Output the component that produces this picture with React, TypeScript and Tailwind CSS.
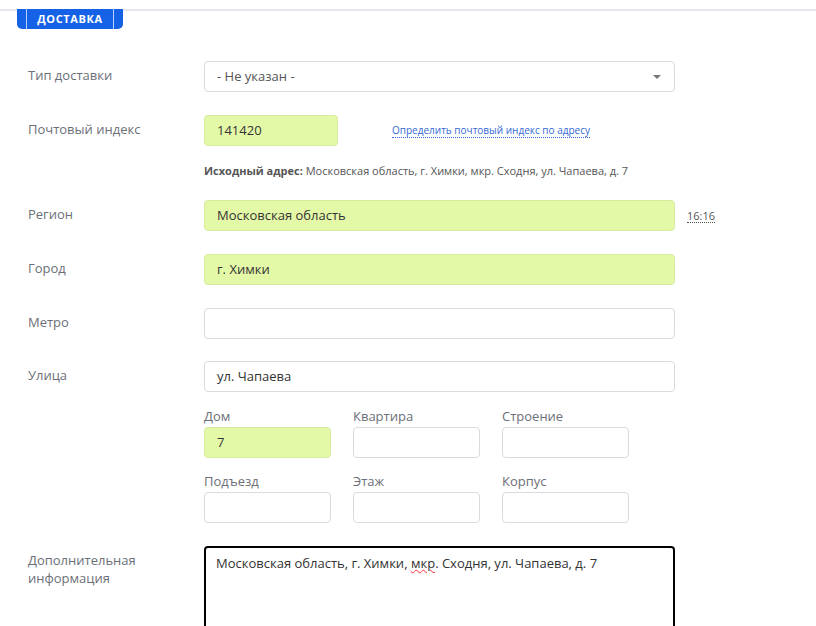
import React from 'react';

const font = { fontFamily: '"Open Sans", "Noto Sans", sans-serif' };

function Field({ value, lime, className = '' }: { value?: string; lime?: boolean; className?: string }) {
  return (
    <div
      className={`h-[31px] rounded-[4px] border px-3 flex items-center text-[13px] text-[#333] ${
        lime ? 'bg-[#e4f9a8] border-[#d6ec9c]' : 'bg-white border-[#d9dbe0]'
      } ${className}`}
    >
      {value}
    </div>
  );
}

function Row({ label, children, className = '' }: { label: React.ReactNode; children: React.ReactNode; className?: string }) {
  return (
    <div className={`flex items-start ${className}`}>
      <div className="w-[176px] shrink-0 pt-[5px] text-[13px] leading-[18px] text-[#6b6f78]">{label}</div>
      <div className="flex-1 min-w-0">{children}</div>
    </div>
  );
}

function Small({ label, value, lime }: { label: string; value?: string; lime?: boolean }) {
  return (
    <div className="w-[127px]">
      <div className="text-[13px] leading-[17px] text-[#6b6f78] mb-[2px]">{label}</div>
      <Field value={value} lime={lime} />
    </div>
  );
}

export default function App() {
  return (
    <div className="w-[816px] h-[626px] overflow-hidden bg-white relative" style={font}>
      <div className="h-[9px]" />
      <div className="border-t-2 border-[#e6e7ec]" />
      <div className="pl-[17px] -mt-[2px]">
        <div className="w-[106px] h-[20px] bg-[#1662e6] rounded-b-[5px] flex px-[9px]">
          <div className="flex-1 border-x border-white/70 flex items-center justify-center text-white text-[11px] font-bold tracking-[0.6px]">
            ДОСТАВКА
          </div>
        </div>
      </div>

      <div className="pl-[28px] pt-[32px]">
        <Row label="Тип доставки">
          <div className="w-[471px] h-[31px] rounded-[4px] border border-[#d9dbe0] px-3 flex items-center justify-between text-[13px] text-[#555]">
            <span>- Не указан -</span>
            <span className="w-0 h-0 border-x-[4px] border-x-transparent border-t-[4px] border-t-[#777] mr-[1px]" />
          </div>
        </Row>

        <Row label="Почтовый индекс" className="mt-[23px]">
          <div className="flex items-center">
            <Field value="141420" lime className="w-[134px]" />
            <a className="ml-[54px] text-[10px] text-[#3569d4] border-b border-dotted border-[#3569d4] leading-[13px]">
              Определить почтовый индекс по адресу
            </a>
          </div>
          <div className="mt-[18px] text-[11px] leading-[13px] text-[#555]">
            <span className="font-bold">Исходный адрес:</span> Московская область, г. Химки, мкр. Сходня, ул. Чапаева, д. 7
          </div>
        </Row>

        <Row label="Регион" className="mt-[23px]">
          <div className="flex items-center">
            <Field value="Московская область" lime className="w-[471px]" />
            <span className="ml-[12px] text-[11px] leading-[13px] text-[#555] border-b border-dotted border-[#555]">16:16</span>
          </div>
        </Row>

        <Row label="Город" className="mt-[23px]">
          <Field value="г. Химки" lime className="w-[471px]" />
        </Row>

        <Row label="Метро" className="mt-[23px]">
          <Field className="w-[471px]" />
        </Row>

        <Row label="Улица" className="mt-[22px]">
          <Field value="ул. Чапаева" className="w-[471px]" />
          <div className="mt-[16px] flex gap-[22px]">
            <Small label="Дом" value="7" lime />
            <Small label="Квартира" />
            <Small label="Строение" />
          </div>
          <div className="mt-[15px] flex gap-[22px]">
            <Small label="Подъезд" />
            <Small label="Этаж" />
            <Small label="Корпус" />
          </div>
        </Row>

        <Row label={<>Дополнительная<br />информация</>} className="mt-[23px]">
          <div className="w-[471px] h-[100px] rounded-[4px] border-2 border-black px-[10px] pt-[5px] text-[13px] leading-[20px] text-[#333]">
            Московская область, г. Химки,{' '}
            <span className="underline decoration-wavy decoration-red-500 decoration-1">мкр</span>. Сходня, ул. Чапаева, д. 7
          </div>
        </Row>
      </div>
    </div>
  );
}
